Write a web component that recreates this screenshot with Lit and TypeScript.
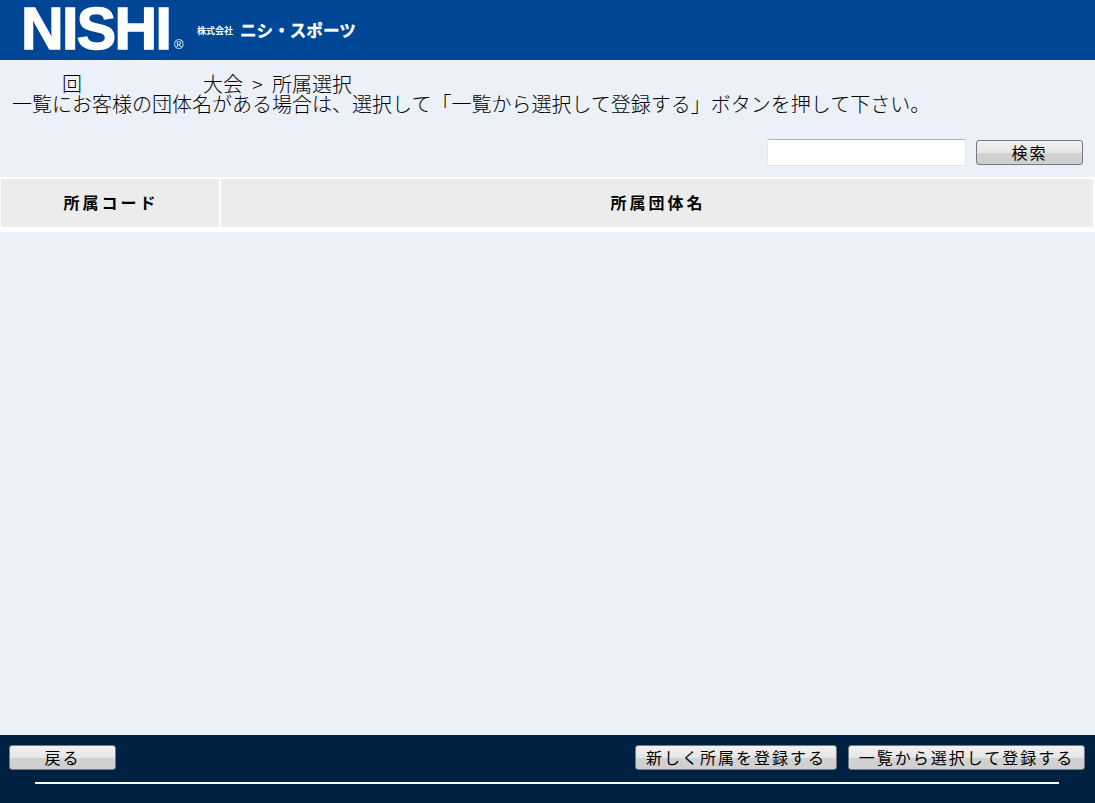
import { LitElement, html, css } from "lit";
import { customElement } from "lit/decorators.js";

@customElement("app-root")
export class AppRoot extends LitElement {
  static styles = css`
    :host {
      display: flex;
      flex-direction: column;
      height: 803px;
      background: #ecf0f8;
      color: #000;
      font-family: "Noto Sans CJK JP", "Liberation Sans", sans-serif;
      font-weight: 300;
      overflow: hidden;
    }
    .top {
      height: 60px;
      background: #004696;
      color: #fff;
      display: flex;
      align-items: flex-start;
      padding-left: 21px;
      flex: none;
    }
    .logo {
      font-family: "Liberation Sans", sans-serif;
      font-weight: 700;
      font-size: 59px;
      line-height: 58px;
      letter-spacing: -1.6px;
      -webkit-text-stroke: 1.4px #fff;
      width: 153px;
      white-space: nowrap;
    }
    .reg {
      font-family: "Liberation Sans", sans-serif;
      font-size: 13px;
      line-height: 14px;
      margin-top: 38px;
      width: 23px;
    }
    .kabu {
      font-size: 9px;
      font-weight: 700;
      line-height: 12px;
      margin-top: 25px;
      width: 43px;
      white-space: nowrap;
    }
    .brand {
      font-size: 16.6px;
      font-weight: 700;
      line-height: 20px;
      margin-top: 20px;
      white-space: nowrap;
      -webkit-text-stroke: 0.3px #fff;
    }
    .main {
      flex: 1;
      display: flex;
      flex-direction: column;
    }
    .crumb {
      font-size: 20px;
      line-height: 19px;
      height: 19px;
      margin-top: 14px;
      display: flex;
      white-space: nowrap;
    }
    .kai {
      margin-left: 62px;
      width: 141px;
    }
    .taikai {
      width: 49px;
    }
    .sep {
      width: 20px;
    }
    .note {
      font-size: 20px;
      line-height: 21px;
      padding-left: 12px;
      white-space: nowrap;
    }
    .search {
      display: flex;
      justify-content: flex-end;
      align-items: center;
      gap: 10px;
      padding-right: 12px;
      margin-top: 24px;
      height: 28px;
    }
    .search input {
      width: 199px;
      height: 27px;
      box-sizing: border-box;
      border: 1px solid #e2e4ea;
      border-top-color: #b4b4b8;
      border-radius: 2px;
      background: #fff;
      padding: 0;
      outline: none;
    }
    .btn {
      box-sizing: border-box;
      height: 25px;
      border: 1px solid #747a82;
      border-radius: 3px;
      background: linear-gradient(#f2f2f2, #e6e6e6 50%, #d2d2d2 51%, #cfcfcf);
      font: inherit;
      font-weight: 400;
      font-size: 16px;
      letter-spacing: 2px;
      line-height: 22px;
      padding: 0 0 1px;
      color: #000;
      text-align: center;
      white-space: nowrap;
    }
    .b-search {
      width: 107px;
    }
    .thead {
      margin-top: 11px;
      background: #fff;
      padding: 2px 2px 5px 1px;
      display: grid;
      grid-template-columns: 218px 1fr;
      gap: 2px;
    }
    .th {
      height: 48px;
      box-sizing: border-box;
      background: #ececec;
      display: flex;
      align-items: center;
      justify-content: center;
      font-size: 16px;
      font-weight: 700;
      letter-spacing: 3px;
      padding: 0 0 2px 2px;
    }
    .foot {
      flex: none;
      height: 68px;
      background: #002141;
      box-sizing: border-box;
      padding-top: 10px;
    }
    .acts {
      display: flex;
      padding: 0 10px 0 9px;
      gap: 11px;
    }
    .b-back {
      width: 107px;
      margin-right: auto;
    }
    .b-new {
      width: 202px;
    }
    .b-pick {
      width: 237px;
    }
    .rule {
      height: 2px;
      background: #fff;
      margin: 12px 36px 0 35px;
    }
  `;

  render() {
    return html`
      <div class="top">
        <div class="logo">NISHI</div>
        <div class="reg">®</div>
        <div class="kabu">株式会社</div>
        <div class="brand">ニシ・スポーツ</div>
      </div>
      <div class="main">
        <div class="crumb">
          <span class="kai">回</span>
          <span class="taikai">大会</span>
          <span class="sep">&gt;</span>
          <span>所属選択</span>
        </div>
        <div class="note">一覧にお客様の団体名がある場合は、選択して「一覧から選択して登録する」ボタンを押して下さい。</div>
        <div class="search">
          <input type="text" />
          <button class="btn b-search">検索</button>
        </div>
        <div class="thead">
          <div class="th">所属コード</div>
          <div class="th">所属団体名</div>
        </div>
      </div>
      <div class="foot">
        <div class="acts">
          <button class="btn b-back">戻る</button>
          <button class="btn b-new">新しく所属を登録する</button>
          <button class="btn b-pick">一覧から選択して登録する</button>
        </div>
        <div class="rule"></div>
      </div>
    `;
  }
}
